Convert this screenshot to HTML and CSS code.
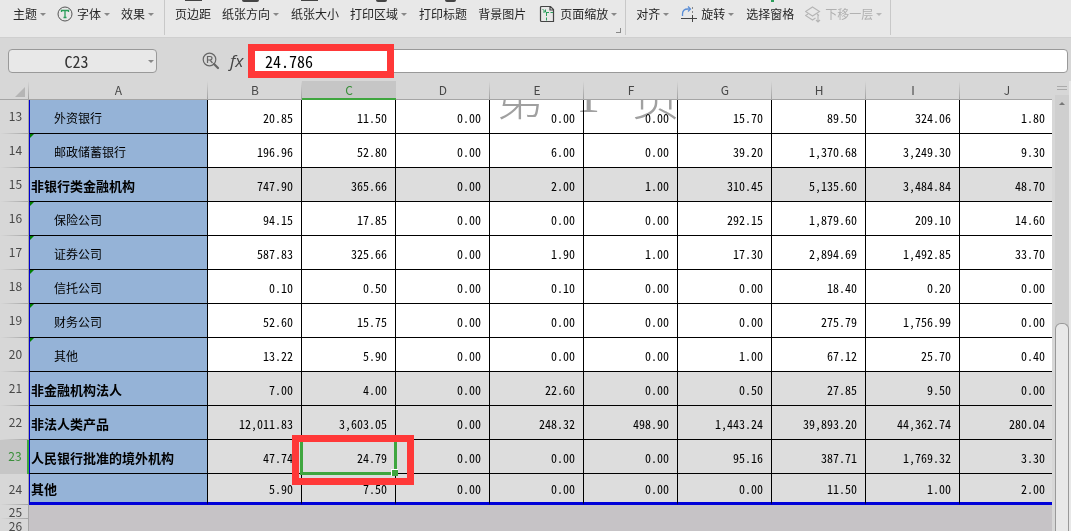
FILE: index.html
```html
<!DOCTYPE html>
<html lang="zh-CN">
<head>
<meta charset="utf-8">
<title>C23</title>
<link rel="stylesheet" href="styles.css">
</head>
<body>
<header class="ribbon">
  <div class="group first">
    <button class="tool">主题<i class="caret"></i></button>
    <button class="tool"><svg class="icon" width="16" height="16" viewBox="0 0 16 16"><circle cx="8" cy="8" r="7" fill="none" stroke="#555"/><path d="M4.5 6V4.5h7V6M8 4.5v7M6.5 11.5h3" fill="none" stroke="#2a9d5a" stroke-width="1.3"/></svg>字体<i class="caret"></i></button>
    <button class="tool">效果<i class="caret"></i></button>
  </div>
  <div class="group">
    <button class="tool"><i class="stub"></i>页边距</button>
    <button class="tool"><i class="stub wide"></i>纸张方向<i class="caret"></i></button>
    <button class="tool"><i class="stub"></i>纸张大小</button>
    <button class="tool"><i class="stub small"></i>打印区域<i class="caret"></i></button>
    <button class="tool"><i class="stub small"></i>打印标题</button>
    <button class="tool">背景图片</button>
    <button class="tool"><svg class="icon" width="18" height="18" viewBox="0 0 18 18"><path d="M4.5 1.500h9l3 3v12h-12q-1 0-1-1v-13q0-1 1-1zM13 2v3h3" fill="none" stroke="#444" stroke-width="1.200"/><path d="M9.500 8v8M9 7.500h7" fill="none" stroke="#2a9d5a" stroke-dasharray="3 1.500"/><path d="M5.500 4l3 3M8.500 4.500V7H6" fill="none" stroke="#2a9d5a"/></svg>页面缩放<i class="caret"></i></button>
    <i class="corner"></i>
  </div>
  <div class="group last">
    <button class="tool">对齐<i class="caret"></i></button>
    <button class="tool"><svg class="icon" width="16" height="17" viewBox="0 0 16 17"><path d="M1.500 10V8q0-5 5.500-5h2" fill="none" stroke="#5b8ed6" stroke-width="1.300"/><path d="M7 .5L9.500 3 7 5.500" fill="none" stroke="#5b8ed6" stroke-width="1.200"/><path d="M0 12.500h16M11.500 9v7" stroke="#444"/><path d="M11.500 1v7" stroke="#888" stroke-dasharray="2 2"/></svg>旋转<i class="caret"></i></button>
    <button class="tool"><i class="stub dot"></i>选择窗格</button>
    <button class="tool" disabled><svg class="icon" width="16" height="17" viewBox="0 0 16 17"><path d="M7.500 1l7 4.500-7 4.500-7-4.500zM3 8L.5 9.500l7 4.500 3-2M12 8l2 1.500M13 9v7M11 14l2 2 2-2" fill="none" stroke="#b5b5b5" stroke-width="1.100"/></svg>下移一层<i class="caret"></i></button>
  </div>
</header>

<section class="formula-bar">
  <div class="name-box">
    <input id="name" type="text" value="C23" aria-label="名称框">
    <button class="drop" aria-label="名称列表"><i class="caret"></i></button>
  </div>
  <button class="mini" aria-label="浏览公式"><svg width="18" height="18" viewBox="0 0 18 18"><circle cx="7.500" cy="7.500" r="6.300" fill="none" stroke="#666" stroke-width="1.200"/><path d="M5.500 11V4.500h2.500q2 0 2 1.700T8 8H5.500M8 8l2.500 3" fill="none" stroke="#666" stroke-width="1.200"/><path d="M12 12l4 4" stroke="#666" stroke-width="2.200" stroke-linecap="round"/></svg></button>
  <label class="fx" for="formula">fx</label>
  <div class="formula">
    <input id="formula" type="text" value="24.786">
    <span class="mark"></span>
  </div>
</section>

<main class="work">
  <div class="sheet">
    <table>
      <colgroup><col class="c-num"><col class="c-name"><col><col><col><col><col><col><col><col><col></colgroup>
      <thead>
        <tr><th class="all"><svg width="10" height="10" viewBox="0 0 10 10"><path d="M10 0v10H0z" fill="#b5b5b5"/></svg></th><th>A</th><th>B</th><th class="on">C</th><th>D</th><th>E</th><th>F</th><th>G</th><th>H</th><th>I</th><th>J</th></tr>
      </thead>
      <tbody>
        <tr><th>13</th><td class="sub">外资银行</td><td>20.85</td><td>11.50</td><td>0.00</td><td>0.00</td><td>0.00</td><td>15.70</td><td>89.50</td><td>324.06</td><td>1.80</td></tr>
        <tr><th>14</th><td class="sub flag">邮政储蓄银行</td><td>196.96</td><td>52.80</td><td>0.00</td><td>6.00</td><td>0.00</td><td>39.20</td><td>1,370.68</td><td>3,249.30</td><td>9.30</td></tr>
        <tr class="total"><th>15</th><td>非银行类金融机构</td><td>747.90</td><td>365.66</td><td>0.00</td><td>2.00</td><td>1.00</td><td>310.45</td><td>5,135.60</td><td>3,484.84</td><td>48.70</td></tr>
        <tr><th>16</th><td class="sub flag">保险公司</td><td>94.15</td><td>17.85</td><td>0.00</td><td>0.00</td><td>0.00</td><td>292.15</td><td>1,879.60</td><td>209.10</td><td>14.60</td></tr>
        <tr><th>17</th><td class="sub flag">证券公司</td><td>587.83</td><td>325.66</td><td>0.00</td><td>1.90</td><td>1.00</td><td>17.30</td><td>2,894.69</td><td>1,492.85</td><td>33.70</td></tr>
        <tr><th>18</th><td class="sub flag">信托公司</td><td>0.10</td><td>0.50</td><td>0.00</td><td>0.10</td><td>0.00</td><td>0.00</td><td>18.40</td><td>0.20</td><td>0.00</td></tr>
        <tr><th>19</th><td class="sub flag">财务公司</td><td>52.60</td><td>15.75</td><td>0.00</td><td>0.00</td><td>0.00</td><td>0.00</td><td>275.79</td><td>1,756.99</td><td>0.00</td></tr>
        <tr><th>20</th><td class="sub flag">其他</td><td>13.22</td><td>5.90</td><td>0.00</td><td>0.00</td><td>0.00</td><td>1.00</td><td>67.12</td><td>25.70</td><td>0.40</td></tr>
        <tr class="total"><th>21</th><td>非金融机构法人</td><td>7.00</td><td>4.00</td><td>0.00</td><td>22.60</td><td>0.00</td><td>0.50</td><td>27.85</td><td>9.50</td><td>0.00</td></tr>
        <tr class="total"><th>22</th><td>非法人类产品</td><td>12,011.83</td><td>3,603.05</td><td>0.00</td><td>248.32</td><td>498.90</td><td>1,443.24</td><td>39,893.20</td><td>44,362.74</td><td>280.04</td></tr>
        <tr class="total"><th class="on">23</th><td>人民银行批准的境外机构</td><td>47.74</td><td class="active">24.79<span class="cursor"></span><span class="mark"></span></td><td>0.00</td><td>0.00</td><td>0.00</td><td>95.16</td><td>387.71</td><td>1,769.32</td><td>3.30</td></tr>
        <tr class="total end"><th>24</th><td>其他</td><td>5.90</td><td>7.50</td><td>0.00</td><td>0.00</td><td>0.00</td><td>0.00</td><td>11.50</td><td>1.00</td><td>2.00</td></tr>
        <tr class="blank"><th>25</th><td colspan="10"></td></tr>
        <tr class="blank"><th>26</th><td colspan="10"></td></tr>
      </tbody>
    </table>
    <div class="watermark"><span>第</span><b>1</b><span>页</span></div>
  </div>
  <div class="scroll">
    <i class="split"></i>
    <div class="track"><i class="up"></i><i class="thumb"></i></div>
  </div>
</main>
</body>
</html>
```
FILE: styles.css
```css
* { box-sizing: border-box; }
html, body { height: 100%; }
body {
  margin: 0;
  display: flex;
  flex-direction: column;
  overflow: hidden;
  background: #d7d7d7;
  color: #000;
  font: 12px/16px "Noto Sans CJK SC", sans-serif;
}
button, input { font: inherit; color: inherit; border: 0; background: none; padding: 0; margin: 0; }

/* Ribbon */
.ribbon {
  display: flex;
  flex: none;
  height: 38px;
  background: #e8e8e8;
  border-bottom: 1px solid #cfcfcf;
  color: #262626;
}
.group {
  position: relative;
  display: flex;
  gap: 11px;
  height: 35px;
  padding: 0 7px 7px 10px;
  border-right: 1px solid #c8c8c8;
}
.group.first { gap: 10px; padding-left: 13px; padding-right: 9px; }
.tool { position: relative; display: flex; align-items: center; white-space: nowrap; }
.tool:disabled { color: #b0b0b0; }
.icon { margin-right: 5px; }
.first .icon, .last .icon { margin-right: 4px; }
.caret {
  margin: 0 2px 0 3px;
  border: 3px solid transparent;
  border-width: 3px 3px 0;
  border-top-color: #888;
}
.tool .caret { margin-right: 1px; }
.tool:disabled .caret { border-top-color: #b8b8b8; }
.stub { position: absolute; top: 0; left: 10px; width: 17px; height: 1px; background: #444; }
.stub.wide { left: 20px; height: 2px; border-radius: 0 0 2px 2px; }
.stub.small { left: 26px; width: 11px; height: 2px; border-radius: 0 0 2px 2px; }
.stub.dot { left: 25px; width: 3px; height: 2px; background: #2a9d5a; }
.corner { position: absolute; right: 4px; bottom: 2px; width: 5px; height: 5px; border: solid #888; border-width: 0 1px 1px 0; }

/* Formula bar */
.formula-bar {
  display: flex;
  flex: none;
  align-items: center;
  height: 43px;
  padding: 3px 3px 0 8px;
}
.name-box {
  display: flex;
  width: 149px;
  height: 24px;
  background: #e8e8e8;
  border: 1px solid #999;
  border-radius: 4px;
}
.name-box input { flex: 1; min-width: 0; padding-right: 4px; text-align: center; color: #333; }
.name-box input, .formula input { font-size: 16px; font-feature-settings: "hwid"; }
.name-box .drop { width: 8px; display: flex; align-items: center; }
.drop .caret { margin: 0; }
.mini { margin-left: 45px; width: 18px; height: 18px; }
.mini svg { display: block; }
.fx { width: 28px; padding-left: 10px; font: italic 400 17px/20px "Open Sans", "Noto Sans", sans-serif; color: #444; }
.formula {
  position: relative;
  flex: 1;
  height: 24px;
  background: #fff;
  border: 1px solid #999;
  border-radius: 4px;
}
.formula input { width: 100%; height: 22px; padding-left: 16px; }
.mark { position: absolute; z-index: 3; border: 7px solid #ff3838; pointer-events: none; }
.formula .mark { left: -1px; top: -6px; width: 146px; height: 34px; }

/* Sheet */
.work { display: flex; flex: 1; min-height: 0; }
.sheet { position: relative; flex: 1; min-width: 0; overflow: hidden; background: #c6c3c6; }
table { table-layout: fixed; width: 1054px; border-collapse: separate; border-spacing: 0; }
col { width: 94px; }
.c-num { width: 29px; }
.c-name { width: 179px; }
th { padding: 0; font-weight: 400; color: #484848; }
thead th {
  height: 19px;
  border-bottom: 1px solid #a5a5a5;
  background: linear-gradient(#d7d7d7, #a0a0a0) right / 1px 100% no-repeat #d7d7d7;
}
thead .all { text-align: right; padding-right: 4px; }
.all svg { display: inline-block; vertical-align: middle; }
thead .on { background: #c6c6c6; border-bottom: 2px solid #3fa63f; color: #3a8f3a; }
tbody th {
  padding: 0 0 2px 3px;
  border-right: 1px solid #a5a5a5;
  background: linear-gradient(90deg, #d7d7d7, #a5a5a5) bottom / 100% 1px no-repeat #d7d7d7;
}
tbody .on { background: #c6c6c6; border-right: 2px solid #3fa63f; color: #3a8f3a; }
td {
  height: 34px;
  padding: 2px 8px 0 0;
  border: solid #000;
  border-width: 0 1px 1px 0;
  background: #fff;
  text-align: right;
  font-feature-settings: "hwid";
}
th + td {
  position: relative;
  padding-left: 1px;
  background: #95b3d7;
  border-left: 1px solid #0000d0;
  text-align: left;
}
td.sub { padding-left: 24px; }
.flag::before {
  content: "";
  position: absolute;
  left: 0;
  top: 0;
  border: solid transparent;
  border-width: 0 4px 4px 0;
  border-left: 0 solid;
  border-top: 4px solid #008000;
  border-bottom: 0;
}
.total td { background: #ddd; }
.total th + td { background: #95b3d7; font-weight: 700; font-size: 13px; }
.end td { height: 31px; border-bottom: 3px solid #0000d8; }
.blank th { height: 14px; padding-bottom: 0; line-height: 12px; }
.blank td { height: 14px; background: none; border: 0; padding: 0; }
td.active { position: relative; }
.cursor { position: absolute; z-index: 2; inset: -2px -2px -2px -2px; border: 3px solid #3fa63f; }
.cursor::after {
  content: "";
  position: absolute;
  right: -4px;
  bottom: -4px;
  width: 6px;
  height: 6px;
  background: #3fa63f;
  border: solid #fff;
  border-width: 1px 0 0 1px;
}
.active .mark { inset: -5px -19px -12px -10px; }
.watermark {
  position: absolute;
  left: 496px;
  top: 19px;
  display: flex;
  align-items: flex-end;
  gap: 32px;
  height: 33px;
  padding-bottom: 14px;
  overflow: hidden;
  color: #a0a0a0;
  font-size: 48px;
  font-weight: 300;
  line-height: 50px;
  mix-blend-mode: darken;
}
.watermark b { font: 400 48px/46px "Liberation Serif", serif; }

/* Scroll bar */
.scroll {
  display: flex;
  flex-direction: column;
  width: 19px;
  padding: 5px 0 0 3px;
  border-right: 2px solid #e8e8e8;
}
.split { flex: none; align-self: center; width: 10px; height: 4px; margin-bottom: 5px; border: solid #aaa; border-width: 1px 0; }
.track { display: flex; flex: 1; flex-direction: column; align-items: center; background: #cfcfcf; }
.up { margin-top: 7px; border: solid transparent; border-width: 0 3px 3px; border-bottom-color: #777; }
.thumb {
  flex: 1;
  align-self: stretch;
  margin-top: 218px;
  border: 1px solid #999;
  border-bottom: 0;
  border-radius: 6px 6px 0 0;
  background: #e8e8e8;
}
```
